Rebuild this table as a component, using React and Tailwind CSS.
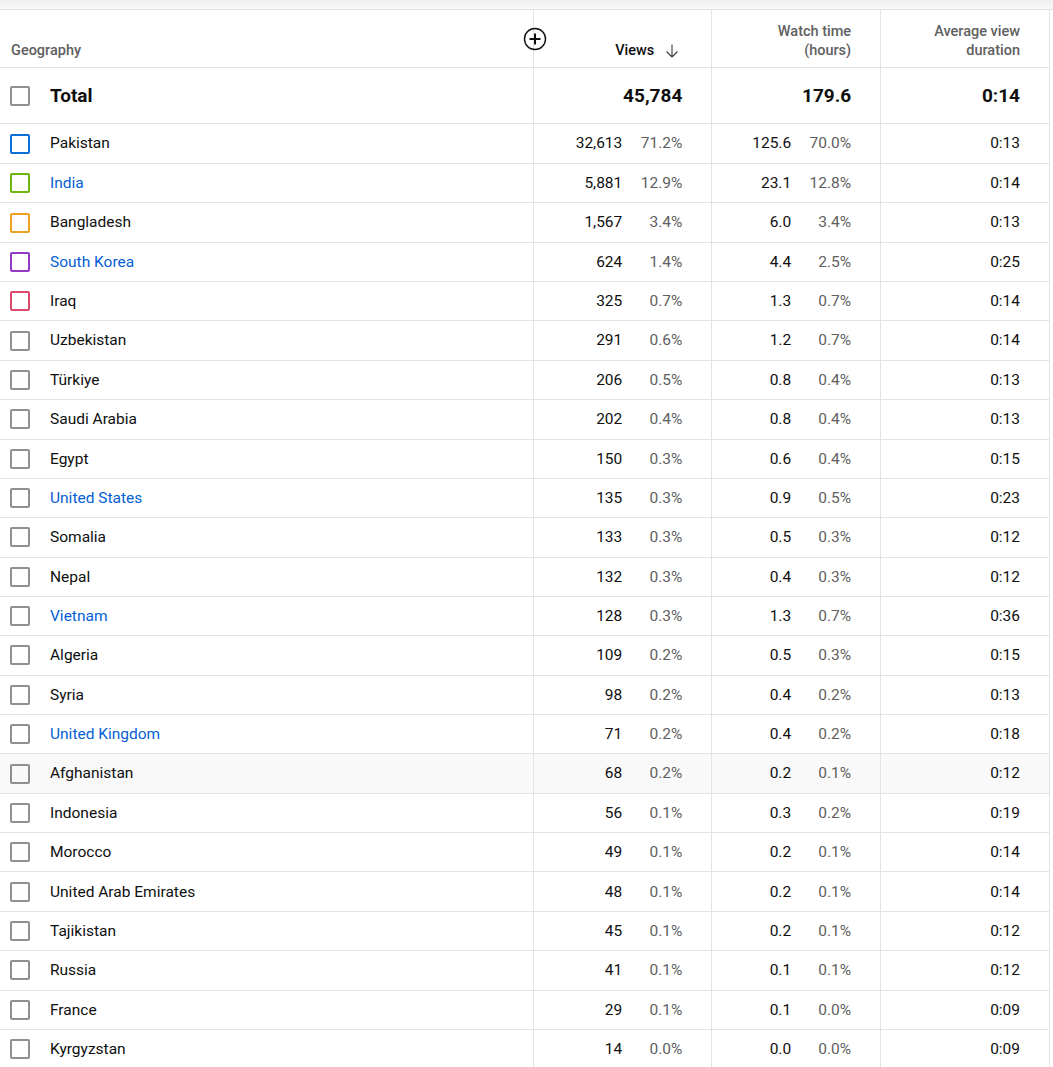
import React from "react";

const rows = [
  ["Pakistan", "32,613", "71.2%", "125.6", "70.0%", "0:13", "border-[#0b6fd6]", false],
  ["India", "5,881", "12.9%", "23.1", "12.8%", "0:14", "border-[#6fb510]", true],
  ["Bangladesh", "1,567", "3.4%", "6.0", "3.4%", "0:13", "border-[#eea121]", false],
  ["South Korea", "624", "1.4%", "4.4", "2.5%", "0:25", "border-[#9638c6]", true],
  ["Iraq", "325", "0.7%", "1.3", "0.7%", "0:14", "border-[#dc4b6c]", false],
  ["Uzbekistan", "291", "0.6%", "1.2", "0.7%", "0:14", "", false],
  ["Türkiye", "206", "0.5%", "0.8", "0.4%", "0:13", "", false],
  ["Saudi Arabia", "202", "0.4%", "0.8", "0.4%", "0:13", "", false],
  ["Egypt", "150", "0.3%", "0.6", "0.4%", "0:15", "", false],
  ["United States", "135", "0.3%", "0.9", "0.5%", "0:23", "", true],
  ["Somalia", "133", "0.3%", "0.5", "0.3%", "0:12", "", false],
  ["Nepal", "132", "0.3%", "0.4", "0.3%", "0:12", "", false],
  ["Vietnam", "128", "0.3%", "1.3", "0.7%", "0:36", "", true],
  ["Algeria", "109", "0.2%", "0.5", "0.3%", "0:15", "", false],
  ["Syria", "98", "0.2%", "0.4", "0.2%", "0:13", "", false],
  ["United Kingdom", "71", "0.2%", "0.4", "0.2%", "0:18", "", true],
  ["Afghanistan", "68", "0.2%", "0.2", "0.1%", "0:12", "", false],
  ["Indonesia", "56", "0.1%", "0.3", "0.2%", "0:19", "", false],
  ["Morocco", "49", "0.1%", "0.2", "0.1%", "0:14", "", false],
  ["United Arab Emirates", "48", "0.1%", "0.2", "0.1%", "0:14", "", false],
  ["Tajikistan", "45", "0.1%", "0.2", "0.1%", "0:12", "", false],
  ["Russia", "41", "0.1%", "0.1", "0.1%", "0:12", "", false],
  ["France", "29", "0.1%", "0.1", "0.0%", "0:09", "", false],
  ["Kyrgyzstan", "14", "0.0%", "0.0", "0.0%", "0:09", "", false],
];

function Checkbox({ color }) {
  return (
    <div
      className={
        "w-[20px] h-[20px] rounded-[2px] border-2 shrink-0 " +
        (color || "border-[#8f8f8f]")
      }
    />
  );
}

export default function App() {
  return (
    <div
      className="w-[1053px] bg-white text-[#0f0f0f]"
      style={{ fontFamily: "Roboto, 'Liberation Sans', sans-serif" }}
    >
      <div className="h-[10px] bg-gradient-to-b from-[#efefef] to-[#fafafa] border-b border-[#e0e0e0]" />
      <div className="w-[1050px] border-r border-[#e3e3e3]">
        {/* header */}
        <div className="relative flex h-[58px] border-b border-[#e3e3e3] text-[14.5px] font-medium leading-[19px]">
          <div className="w-[535px] border-r border-[#e3e3e3] flex items-end pl-[11px] pb-[7px] text-[#606060]">
            Geography
          </div>
          <div className="w-[178px] border-r border-[#e3e3e3] flex items-end justify-end pr-[31px] pb-[7px] text-[#0f0f0f]">
            <span>Views</span>
            <svg
              className="ml-[10px] mb-[1px]"
              width="16"
              height="16"
              viewBox="0 0 16 16"
              fill="none"
              stroke="#3a3a3a"
              strokeWidth="1.1"
            >
              <path d="M8 1.5v12.5M2.5 8.5L8 14l5.5-5.5" />
            </svg>
          </div>
          <div className="w-[169px] border-r border-[#e3e3e3] flex flex-col items-end justify-end pr-[29px] pb-[7px] text-[#606060] text-right">
            <span>Watch time</span>
            <span>(hours)</span>
          </div>
          <div className="w-[168px] flex flex-col items-end justify-end pr-[29px] pb-[7px] text-[#606060] text-right">
            <span>Average view</span>
            <span>duration</span>
          </div>
          <svg
            className="absolute left-[523px] top-[17px]"
            width="24"
            height="24"
            viewBox="0 0 24 24"
            fill="none"
            stroke="#0f0f0f"
          >
            <circle cx="12" cy="12" r="10.5" strokeWidth="1.4" />
            <path d="M12 6.5v11M6.5 12h11" strokeWidth="2" />
          </svg>
        </div>

        {/* total */}
        <div className="flex h-[56px] border-b border-[#e3e3e3] text-[19px] font-bold">
          <div className="w-[535px] border-r border-[#e3e3e3] flex items-center pl-[10px] pt-[1px]">
            <Checkbox />
            <span className="ml-[20px]">Total</span>
          </div>
          <div className="w-[178px] border-r border-[#e3e3e3] flex items-center justify-end pr-[29px] pt-[1px]">
            45,784
          </div>
          <div className="w-[169px] border-r border-[#e3e3e3] flex items-center justify-end pr-[29px] pt-[1px]">
            179.6
          </div>
          <div className="w-[168px] flex items-center justify-end pr-[29px] pt-[1px]">0:14</div>
        </div>

        {rows.map(([name, v, vp, w, wp, avg, color, link], i) => (
          <div
            key={name}
            className={
              "flex border-b border-[#e3e3e3] text-[15.5px] " +
              (i === 0 ? "h-[40px] " : "h-[39.36px] ") +
              (name === "Afghanistan" ? "bg-[#f9f9f9]" : "bg-white")
            }
          >
            <div className="w-[535px] border-r border-[#e3e3e3] flex items-center pl-[10px]">
              <Checkbox color={color} />
              <span className={"ml-[20px] pt-[1px] " + (link ? "text-[#065fd4]" : "text-[#0f0f0f]")}>
                {name}
              </span>
            </div>
            <div className="w-[178px] border-r border-[#e3e3e3] flex items-center justify-end pr-[29px] pt-[1px]">
              <span>{v}</span>
              <span className="w-[60px] text-right text-[#606060]">{vp}</span>
            </div>
            <div className="w-[169px] border-r border-[#e3e3e3] flex items-center justify-end pr-[29px] pt-[1px]">
              <span>{w}</span>
              <span className="w-[60px] text-right text-[#606060]">{wp}</span>
            </div>
            <div className="w-[168px] flex items-center justify-end pr-[29px] pt-[1px]">{avg}</div>
          </div>
        ))}
      </div>
    </div>
  );
}
